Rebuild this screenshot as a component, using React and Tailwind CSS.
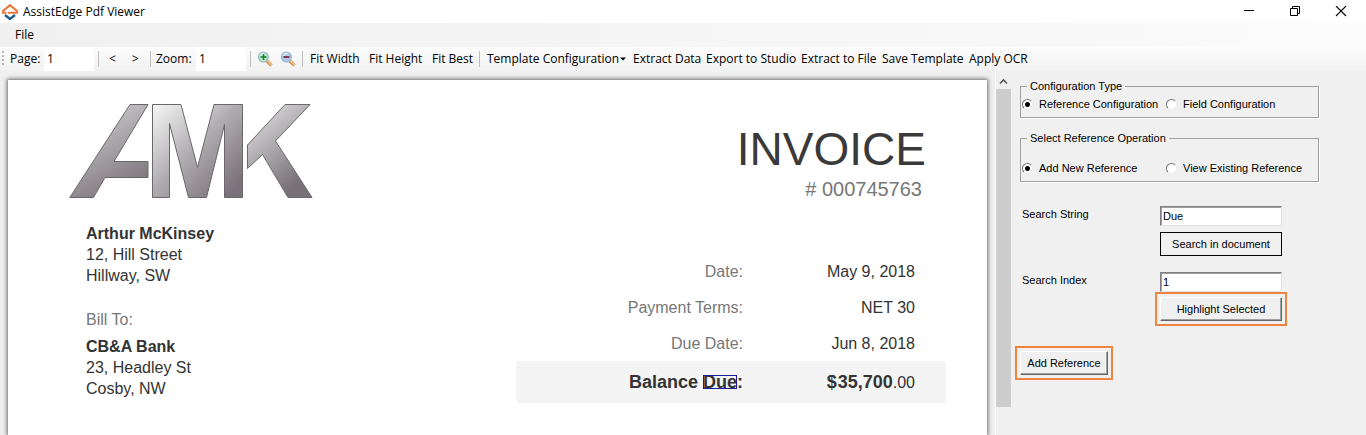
import React from "react";

function AppLogo() {
  return (
    <svg width="18" height="18" viewBox="0 0 18 18" aria-hidden="true">
      <path d="M5.500 9.800H2V8L9 2.200L16 8V9.800H6.800" fill="none" stroke="#e6793a" strokeWidth="2.1" />
      <path d="M4 12L9 16L14 12" fill="none" stroke="#1d5b8c" strokeWidth="2.3" />
    </svg>
  );
}

function Magnifier({ plus }) {
  return (
    <svg width="16" height="16" viewBox="0 0 16 16" aria-hidden="true">
      <path d="M9.6 9.6L14.4 14.4" stroke="#c98a52" strokeWidth="3.4" />
      <path d="M10 9.4L14.6 14" stroke="#f7bd80" strokeWidth="1.9" />
      <circle cx="6.4" cy="6" r="4.9" fill={plus ? "#b4ecbb" : "#aecbec"} stroke="#9fb6cf" strokeWidth="1.3" />
      <path d="M3.4 4.8A3.6 3.6 0 0 1 7.4 2.4" fill="none" stroke="#e9f5fb" strokeWidth="1.2" />
      {plus ? (
        <path d="M3.500 6H9.500M6.500 3V9" stroke="#15803a" strokeWidth="1.5" />
      ) : (
        <path d="M3.500 6H9.500" stroke="#7c2a3c" strokeWidth="1.8" />
      )}
    </svg>
  );
}

function AmkLogo() {
  const stroke = { stroke: "#6b686b", strokeWidth: 1 };
  return (
    <svg width="244" height="96" viewBox="0 0 244 96" role="img" aria-label="AMK">
      <defs>
        <linearGradient id="ga" gradientUnits="userSpaceOnUse" x1="30" y1="10" x2="75" y2="90">
          <stop offset="0" stopColor="#c6c4c6" />
          <stop offset="1" stopColor="#756d75" />
        </linearGradient>
        <linearGradient id="gm" gradientUnits="userSpaceOnUse" x1="84" y1="6" x2="164" y2="86">
          <stop offset="0" stopColor="#f4f4f4" />
          <stop offset="0.5" stopColor="#b0adb0" />
          <stop offset="1" stopColor="#7b717a" />
        </linearGradient>
        <linearGradient id="gk" gradientUnits="userSpaceOnUse" x1="182" y1="20" x2="230" y2="80">
          <stop offset="0" stopColor="#d4d3d4" />
          <stop offset="1" stopColor="#777077" />
        </linearGradient>
      </defs>
      <path d="M61 1.5H79L45 58.5H79V74.5H36L24.5 94.5H.8Z" fill="url(#ga)" {...stroke} />
      <path d="M83.5 1.5H112L128.500 64.500L145 1.500H173.500V94.500H155.500V21.500L137.500 94.500H119.500L100.500 20.500V94.500H83.500Z" fill="url(#gm)" {...stroke} />
      <path d="M216 1.5H241L206.500 38L243 94.500H219L193.500 51.500L178.500 65.500V42Z" fill="url(#gk)" {...stroke} />
    </svg>
  );
}

function Separator({ className = "" }) {
  return <div className={"h-4 w-px bg-[#bdbdbd] " + className} />;
}

function ToolButton({ children, className = "" }) {
  return (
    <button type="button" className={"whitespace-nowrap text-left " + className}>
      {children}
    </button>
  );
}

function Radio({ name, label, checked, className = "" }) {
  return (
    <label className={"flex items-center whitespace-nowrap " + className}>
      <input
        type="radio"
        name={name}
        defaultChecked={checked}
        className="size-[11px] shrink-0 appearance-none rounded-full border border-t-[#777777] border-r-[#eeeeee] border-b-[#eeeeee] border-l-[#777777] bg-white checked:bg-[radial-gradient(circle,#000_0_2px,#fff_3px)]"
      />
      <span className="ml-1.5">{label}</span>
    </label>
  );
}

function DetailRow({ label, value }) {
  return (
    <div className="flex h-9 items-center pr-[31px]">
      <dt className="flex-1 text-right text-[#777777]">{label}</dt>
      <dd className="w-[172px] text-right">{value}</dd>
    </div>
  );
}

function Invoice() {
  return (
    <article className="flex-1 bg-white px-[41px] pt-[23px] font-['Liberation_Sans',sans-serif] text-[16px] leading-[21px] text-[#333333] shadow-[0_0_4px_1px_#666666]">
      <header className="flex items-start justify-between">
        <div className="pl-5">
          <AmkLogo />
        </div>
        <div className="pt-5 pr-5 text-right">
          <h1 className="text-[46px] leading-[52px] text-[#3a3a3a]">INVOICE</h1>
          <p className="mt-0.5 pr-1 text-[20px] leading-6 text-[#777777]"># 000745763</p>
        </div>
      </header>
      <div className="mt-[22px] flex items-start justify-between">
        <div className="pl-[37px]">
          <p className="font-bold">Arthur McKinsey</p>
          <p>12, Hill Street</p>
          <p>Hillway, SW</p>
          <p className="mt-[23px] text-[#777777]">Bill To:</p>
          <p className="mt-1.5 font-bold">CB&amp;A Bank</p>
          <p>23, Headley St</p>
          <p>Cosby, NW</p>
        </div>
        <dl className="mt-[30px] w-[430px]">
          <DetailRow label="Date:" value="May 9, 2018" />
          <DetailRow label="Payment Terms:" value="NET 30" />
          <DetailRow label="Due Date:" value="Jun 8, 2018" />
          <div className="flex h-[42px] items-center rounded bg-[#f4f4f4] pr-[31px]">
            <dt className="flex-1 text-right text-[18px] font-bold">
              Balance <span className="inline-block leading-[14px] outline -outline-offset-1 outline-[#1a1a9c]">Due</span>:
            </dt>
            <dd className="w-[172px] text-right">
              <b className="text-[18px]"><span className="mr-px">$</span>35,700</b>.00
            </dd>
          </div>
        </dl>
      </div>
    </article>
  );
}

const raised =
  "border border-t-white border-l-white border-r-[#666666] border-b-[#666666] shadow-[inset_-1px_-1px_0_#a0a0a0]";
const field =
  "h-5 w-[122px] border border-t-[#808080] border-l-[#808080] border-r-[#e3e3e3] border-b-[#e3e3e3] bg-white px-0.5 shadow-[inset_1px_1px_0_#a0a0a0]";
const group = "w-[299px] border border-[#a0a0a0] shadow-[1px_1px_0_#ffffff]";

function ConfigPanel() {
  return (
    <aside className="w-[355px] shrink-0 pt-[7px] pl-[9px] font-['Liberation_Sans',sans-serif] text-[11px] leading-4 text-black">
      <fieldset className={group + " h-[40px]"}>
        <legend className="ml-1.5 px-[3px]">Configuration Type</legend>
        <div className="mt-0.5 flex pl-px">
          <Radio name="type" label="Reference Configuration" checked className="w-36" />
          <Radio name="type" label="Field Configuration" />
        </div>
      </fieldset>
      <fieldset className={group + " mt-3 h-[52px]"}>
        <legend className="ml-1.5 px-[3px]">Select Reference Operation</legend>
        <div className="mt-3.5 flex pl-px">
          <Radio name="operation" label="Add New Reference" checked className="w-36" />
          <Radio name="operation" label="View Existing Reference" />
        </div>
      </fieldset>
      <div className="mt-6 flex items-start pl-0.5">
        <label htmlFor="search-string" className="w-[138px]">Search String</label>
        <div>
          <input id="search-string" defaultValue="Due" className={field} />
          <button type="button" className="mt-1.5 block h-6 w-[122px] border border-black">
            Search in document
          </button>
        </div>
      </div>
      <div className="mt-4 flex items-start pl-0.5">
        <label htmlFor="search-index" className="w-[138px]">Search Index</label>
        <div>
          <input id="search-index" defaultValue="1" className={field} />
          <div className="-ml-[5px] border-2 border-[#ed8440] p-[3px]">
            <button type="button" className={"block h-6 w-[122px] " + raised}>Highlight Selected</button>
          </div>
        </div>
      </div>
      <div className="mt-5 -ml-[5px] w-fit border-2 border-[#ed8440] p-[3px]">
        <button type="button" className={"block h-6 w-[88px] " + raised}>Add Reference</button>
      </div>
    </aside>
  );
}

export default function App() {
  return (
    <div className="flex h-screen flex-col overflow-hidden bg-[#f0f0f0] font-['Open_Sans',sans-serif] text-[12px] leading-4 text-black">
      <header className="flex h-[23px] shrink-0 items-center bg-white pl-px">
        <AppLogo />
        <span className="ml-1">AssistEdge Pdf Viewer</span>
        <div className="ml-auto flex items-center gap-[34px] pr-[19px]">
          <button type="button" aria-label="Minimize">
            <svg width="12" height="12" viewBox="0 0 12 12"><path d="M1 4.500H11" stroke="#000" /></svg>
          </button>
          <button type="button" aria-label="Restore">
            <svg width="12" height="12" viewBox="0 0 12 12" fill="none" stroke="#000"><path d="M1.500 2.500H8.500V9.500H1.500ZM3.500 2.500V.500H10.500V7.500H8.500" /></svg>
          </button>
          <button type="button" aria-label="Close">
            <svg width="12" height="12" viewBox="0 0 12 12" stroke="#000" strokeWidth="1.1"><path d="M1 0L11 10M11 0L1 10" /></svg>
          </button>
        </div>
      </header>
      <nav className="flex h-6 shrink-0 items-center bg-linear-to-r from-[#f0f0f0] to-[#fbfbfb] pl-[15px]">
        <button type="button">File</button>
      </nav>
      <div className="flex h-6 shrink-0 items-center bg-linear-to-b from-[#fcfcfc] to-[#f2f2f2]">
        <div className="ml-0.5 h-4 w-0.5 bg-[repeating-linear-gradient(#b8b8b8_0_2px,transparent_2px_4px)]" />
        <label htmlFor="page" className="ml-1.5 w-[34px] whitespace-nowrap">Page:</label>
        <input id="page" defaultValue="1" className="h-6 w-[50px] bg-white pb-0.5 pl-[3px]" />
        <Separator className="ml-1" />
        <ToolButton className="ml-2.5 w-[23px]">&lt;</ToolButton>
        <ToolButton className="w-[17px]">&gt;</ToolButton>
        <Separator className="ml-px" />
        <label htmlFor="zoom" className="ml-[5px] w-10 whitespace-nowrap">Zoom:</label>
        <input id="zoom" defaultValue="1" className="h-6 w-[50px] bg-white pb-0.5 pl-[3px]" />
        <Separator className="ml-1" />
        <button type="button" aria-label="Zoom in" className="ml-1.5"><Magnifier plus /></button>
        <button type="button" aria-label="Zoom out" className="ml-[7px]"><Magnifier /></button>
        <Separator className="ml-1.5" />
        <ToolButton className="ml-[7px] w-[59px]">Fit Width</ToolButton>
        <ToolButton className="w-[63px]">Fit Height</ToolButton>
        <ToolButton className="w-[47px]">Fit Best</ToolButton>
        <Separator />
        <ToolButton className="ml-[7px] flex w-[146px] items-center">
          <span className="w-[133px]">Template Configuration</span>
          <svg width="6" height="4" viewBox="0 0 6 4" aria-hidden="true"><path d="M0 .5H6L3 3.500Z" /></svg>
        </ToolButton>
        <ToolButton className="w-[73px]">Extract Data</ToolButton>
        <ToolButton className="w-[95px]">Export to Studio</ToolButton>
        <ToolButton className="w-[81px]">Extract to File</ToolButton>
        <ToolButton className="w-[87px]">Save Template</ToolButton>
        <ToolButton>Apply OCR</ToolButton>
      </div>
      <div className="flex min-h-0 flex-1 overflow-hidden">
        <main className="flex min-w-0 flex-1 overflow-hidden pt-[9px] pl-2">
          <Invoice />
          <div className="w-2 shrink-0" />
        </main>
        <div className="flex w-4 shrink-0 flex-col border-l border-white pt-1.5">
          <svg width="15" height="12" viewBox="0 0 15 12" aria-hidden="true"><path d="M4 6.500L7.500 3L11 6.500" fill="none" stroke="#555" strokeWidth="1.6" /></svg>
          <div className="h-[318px] bg-[#cdcdcd]" />
        </div>
        <ConfigPanel />
      </div>
    </div>
  );
}
